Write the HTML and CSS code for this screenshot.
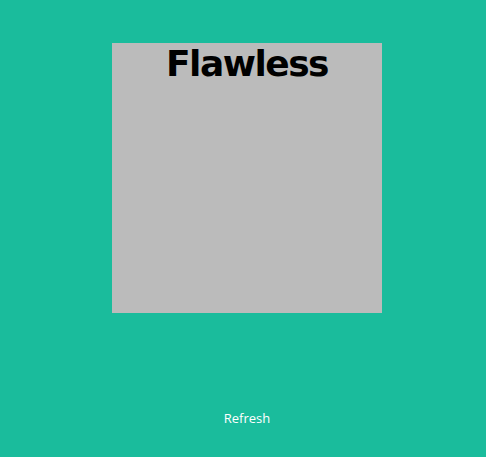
FILE: index.html
```html
<!DOCTYPE html>
<html>
<head>
<meta charset="utf-8">
<link rel="stylesheet" href="styles.css">
</head>
<body>
<main class="page">
  <div class="card">
    <h1 class="title">Flawless</h1>
  </div>
  <button class="refresh">Refresh</button>
</main>
</body>
</html>
```
FILE: styles.css
```css
html, body {
  margin: 0;
  height: 100%;
  background: #1abc9c;
}
.page {
  box-sizing: border-box;
  height: 457px;
  padding: 43px 0 0 8px;
  display: flex;
  flex-direction: column;
  align-items: center;
}
.card {
  width: 270px;
  height: 270px;
  background: #bbbbbb;
  display: flex;
  justify-content: center;
}
.title {
  margin: 0;
  font-family: "DejaVu Sans", sans-serif;
  font-weight: 700;
  font-size: 36px;
  letter-spacing: -1.5px;
  line-height: 42px;
  color: #000;
}
.refresh {
  margin-top: 96px;
  background: none;
  border: 0;
  padding: 0;
  color: #fff;
  font-family: "Open Sans", sans-serif;
  font-size: 13px;
}
```
